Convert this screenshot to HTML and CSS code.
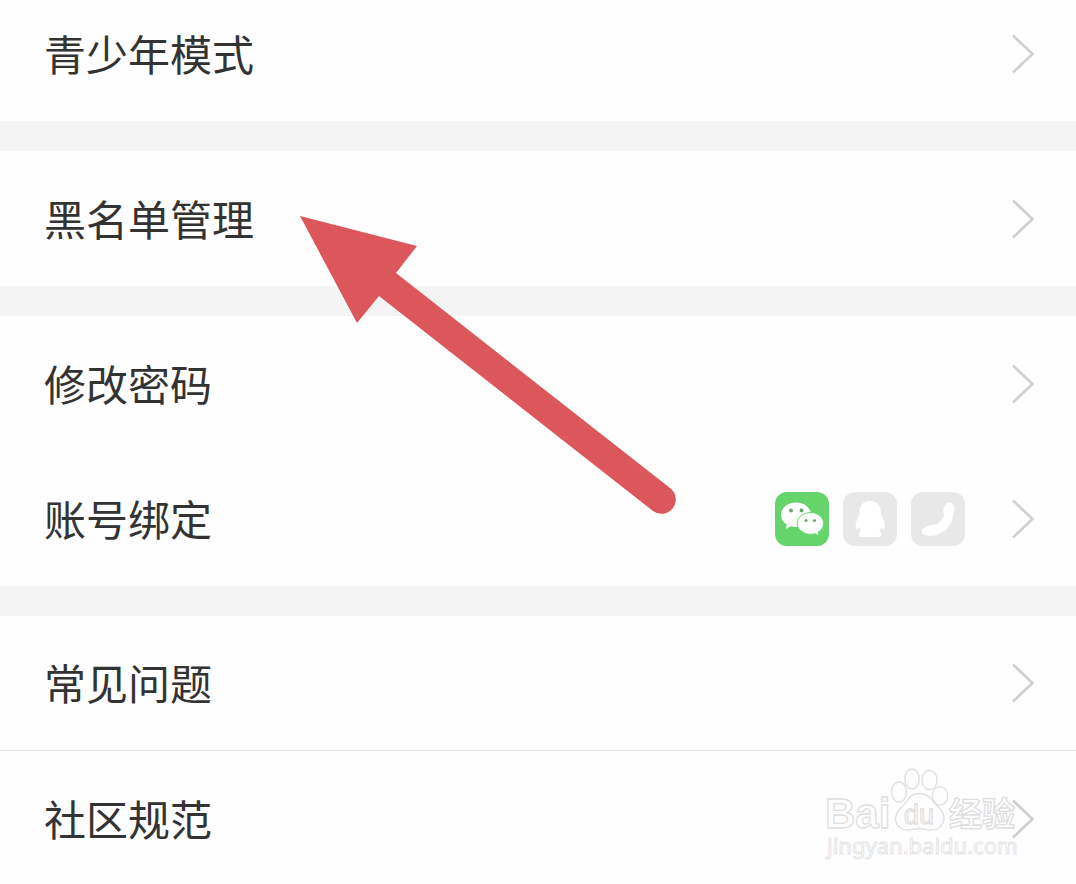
FILE: index.html
```html
<!DOCTYPE html>
<html lang="zh-CN">
<head>
<meta charset="utf-8">
<meta name="viewport" content="width=device-width, initial-scale=1">
<title>设置</title>
<link rel="stylesheet" href="styles.css">
</head>
<body>
<svg class="defs" aria-hidden="true">
  <symbol id="chevron" viewBox="0 0 24 42"><path d="M2 2.500 21.500 21 2 39.500" fill="none" stroke="currentColor" stroke-width="2.600"/></symbol>
</svg>
<main class="settings">
  <section class="group group-first">
    <a class="row" href="#"><span class="label">青少年模式</span><svg class="chevron" aria-hidden="true"><use href="#chevron"/></svg></a>
  </section>
  <section class="group">
    <a class="row" href="#"><span class="label">黑名单管理</span><svg class="chevron" aria-hidden="true"><use href="#chevron"/></svg></a>
  </section>
  <section class="group">
    <a class="row" href="#"><span class="label">修改密码</span><svg class="chevron" aria-hidden="true"><use href="#chevron"/></svg></a>
    <a class="row" href="#">
      <span class="label">账号绑定</span>
      <span class="accounts">
        <svg class="account wechat" viewBox="0 0 54 54" role="img" aria-label="微信">
          <path fill="#fff" d="M21 10.500C12.500 10.500 6 16 6 23c0 4 2.200 7.400 5.600 9.600L11 37l4.800-2.700c1.700.5 3.400.8 5.200.8 8.500 0 15-5.400 15-12.300s-6.500-12.300-15-12.300z"/>
          <path fill="#fff" stroke="#65d46b" stroke-width="1" d="M35.500 20.500c-7.400 0-13.300 4.900-13.300 10.900s5.900 10.900 13.300 10.900c1.600 0 3-.2 4.400-.6l4.200 2.200-.9-3.800c3.400-2 5.500-5.200 5.500-8.700 0-6-5.900-10.900-13.200-10.900z"/>
          <g fill="#65a96a"><circle cx="16" cy="18.500" r="1.900"/><circle cx="26.500" cy="18.500" r="1.900"/><circle cx="31" cy="28.500" r="1.500"/><circle cx="39.500" cy="28.500" r="1.500"/></g>
        </svg>
        <svg class="account" viewBox="0 0 54 54" role="img" aria-label="QQ">
          <path fill="#fff" d="M27 9c-6.800 0-10.500 4.700-10.500 10.800 0 2-.2 3.500-1 5.200-1.700 3-2.900 6-2.900 9 0 1.800.4 3.100 1.100 3.100 1 0 1.900-.9 2.600-1.900.3 1.700.8 3 1.600 4.100-1.500.9-2 2-2 3.400 0 1.600 1.300 2.300 3.200 2.300h16.300c1.900 0 3-.7 3-2.300 0-1.400-.7-2.500-2-3.400.8-1.100 1.400-2.400 1.700-4.100.8 1 1.700 1.900 2.600 1.900.7 0 1.100-1.300 1.100-3.100 0-3-1.200-6-2.900-9-.8-1.700-1-3.200-1-5.200C37.900 13.700 33.800 9 27 9z"/>
        </svg>
        <svg class="account" viewBox="0 0 54 54" role="img" aria-label="手机">
          <path fill="#fff" d="M38.500 10.300c3 .5 5.700 4.200 5 8.300-.4 2.300-1.200 3.900-1.600 6.400-1.200 7.300-6 13.600-13.400 16.600-2.300.9-4.500 2.200-8.200 2.200-4.400 0-8-.9-9.400-3.400-.8-1.800 0-3.800 2.200-4.500 2.600-.9 5.500-2.900 7.700-2.900 1.900 0 3.500.2 4.900-.7 3.300-2.200 5.700-4.700 7-7.700.7-1.500.4-2.600-.2-3.900-1.200-2.900.6-5.700 2.300-8.400.9-1.500 2-2.300 3.700-2z"/>
        </svg>
      </span>
      <svg class="chevron" aria-hidden="true"><use href="#chevron"/></svg>
    </a>
  </section>
  <section class="group">
    <a class="row row-divided" href="#"><span class="label">常见问题</span><svg class="chevron" aria-hidden="true"><use href="#chevron"/></svg></a>
    <a class="row" href="#"><span class="label">社区规范</span><svg class="chevron" aria-hidden="true"><use href="#chevron"/></svg></a>
  </section>

  <svg class="arrow" viewBox="0 0 378 300" aria-hidden="true">
    <path fill="#dc575c" d="M0 0 117 30 96 57 370 272A14 14 0 0 1 353 295L79 80 57 107z"/>
  </svg>

  <svg class="watermark" viewBox="0 0 204 100" role="img" aria-label="Baidu 经验">
    <g fill="#fff" fill-opacity=".4" stroke="#dedede" stroke-width="1.300">
      <text class="wm-brand" x="5" y="64">Bai</text>
      <ellipse cx="79" cy="28" rx="7.500" ry="10"/>
      <ellipse cx="92" cy="15" rx="7.200" ry="10"/>
      <ellipse cx="109.500" cy="16" rx="7.600" ry="9.700"/>
      <ellipse cx="120" cy="32" rx="7.600" ry="9.300"/>
      <path d="M99 29.500c-6 0-9.500 3-12 7.500s-11 8.500-11.500 17c0 7 5 12 12 12 4 0 7-1.500 12-1.500s7 1.500 11.500 1.500c7.500 0 13-5 13-12 0-8.500-8-12.500-11.500-17.500-3-4.500-7-7-13.500-7z"/>
      <text class="wm-du" x="84" y="60">du</text>
      <text class="wm-cn" x="129" y="62">经验</text>
    </g>
    <text class="wm-url" x="7" y="90">jingyan.baidu.com</text>
  </svg>
</main>
</body>
</html>
```
FILE: styles.css
```css
* {
  box-sizing: border-box;
}

body {
  margin: 0;
  height: 100vh;
  overflow: hidden;
  background: #f4f4f4;
  color: #333;
  font-family: "Noto Sans CJK SC", sans-serif;
}

.defs {
  position: absolute;
  width: 0;
  height: 0;
}

.settings {
  position: relative;
  display: flex;
  flex-direction: column;
  gap: 30px;
}

.group {
  background: #fefefe;
}

.group-first {
  padding-bottom: 14px;
}

.row {
  display: flex;
  align-items: center;
  height: 135px;
  padding: 0 41px 0 44px;
  color: inherit;
  text-decoration: none;
}

.group-first .row {
  height: 107px;
}

.row-divided {
  border-bottom: 1px solid #e2e2e2;
}

.label {
  flex: 1;
  padding-bottom: 2px;
  font-size: 42px;
  line-height: 60px;
}

.chevron {
  width: 24px;
  height: 42px;
  color: #d0d0d0;
}

.accounts {
  display: flex;
  gap: 14px;
  margin-right: 46px;
}

.account {
  width: 54px;
  height: 54px;
  border-radius: 12px;
  background: #e8e8e8;
}

.wechat {
  background: #65d46b;
}

.arrow {
  position: absolute;
  left: 300px;
  top: 216px;
  width: 378px;
  height: 300px;
}

.watermark {
  position: absolute;
  right: 52px;
  bottom: 22px;
  width: 204px;
  height: 100px;
}

.wm-brand,
.wm-du {
  font-family: "Liberation Sans", Arial, sans-serif;
}

.wm-brand {
  font-size: 42px;
  font-weight: 700;
}

.wm-du {
  font-size: 27px;
}

.wm-cn {
  font-size: 33px;
  font-weight: 700;
}

.wm-url {
  font-family: "Noto Sans", sans-serif;
  font-size: 22px;
  fill: #fff;
  stroke: #e4e4e4;
  stroke-width: 1px;
}
```
